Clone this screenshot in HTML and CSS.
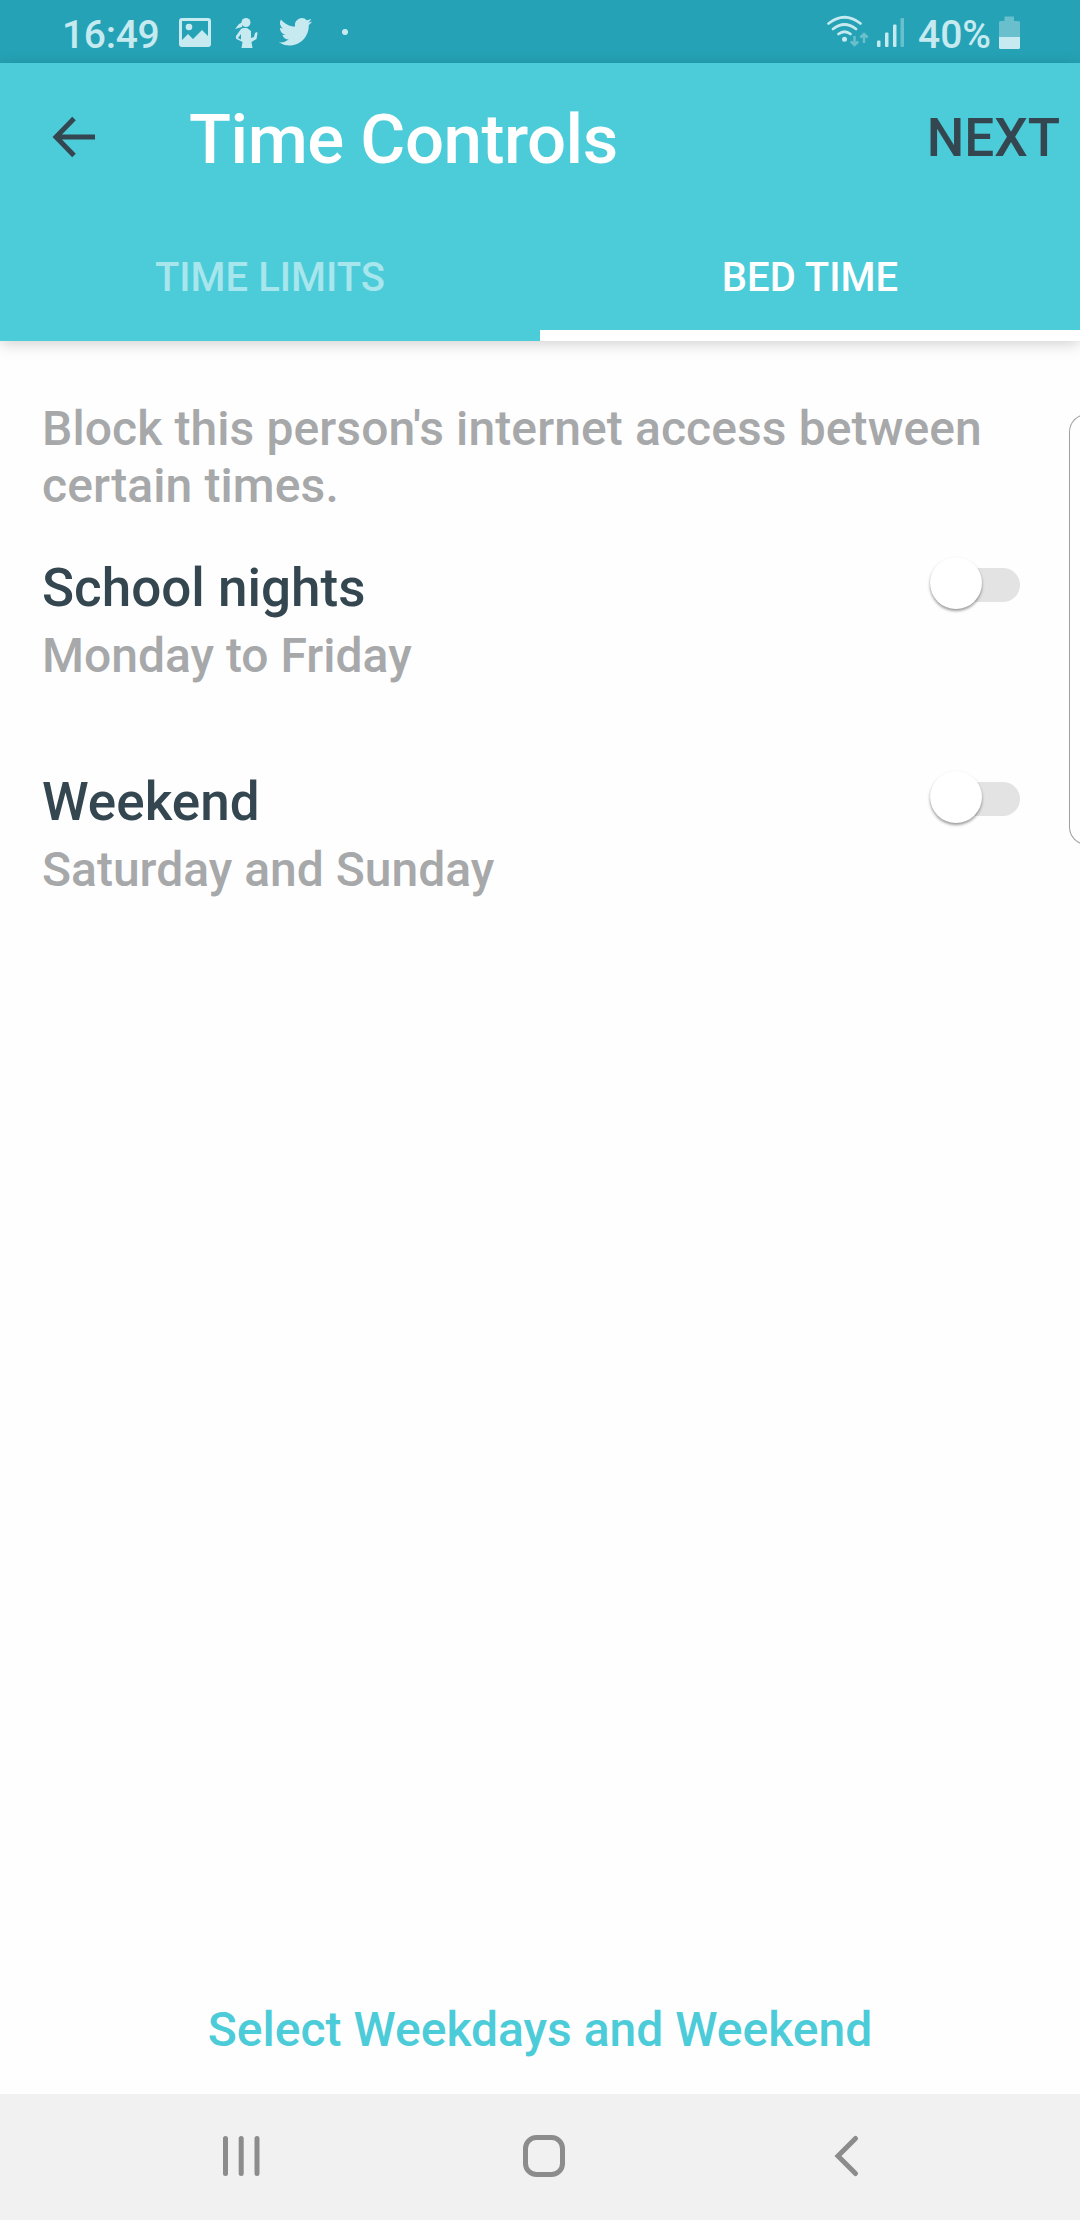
FILE: index.html
```
<!DOCTYPE html>
<html lang="en">
<head>
    <meta charset="UTF-8">
    <meta name="viewport" content="width=device-width, initial-scale=1.0">
    <title>Time Controls</title>
    <link rel="stylesheet" href="styles.css">
</head>
<body>
    <!-- Status Bar -->
    <div class="status-bar">
        <span class="clock">16:49</span>
        <svg class="status-left" width="136" height="63" viewBox="178 0 136 63">
            <path fill-rule="evenodd" d="M182 18h26q3 0 3 3v23q0 3-3 3h-26q-3 0-3-3v-23q0-3 3-3zM182 21v19l6-6 5 5 9-9 6 6v-15z"/>
            <circle cx="189" cy="27" r="3.3"/>
            <circle cx="246" cy="22.500" r="4.500"/>
            <path d="M243 22l-4 2-4 5 7-2zM243 28l4 0 4 3v7l3-1 1-4 2-1 .5 1-1 6-5 3 1 6h-11l1-6-6-3q-1-1-.5-3l5-7zM241 34l-3 4 3 1.500z" fill-rule="evenodd"/>
            <path transform="translate(278.600 15) scale(1.4)" d="M23.950 4.570a10 10 0 0 1-2.820.770 4.960 4.960 0 0 0 2.160-2.720c-.950.550-2 .950-3.130 1.180a4.920 4.920 0 0 0-8.380 4.480C7.690 8.090 4.070 6.130 1.640 3.160a4.920 4.920 0 0 0 1.520 6.570 4.900 4.900 0 0 1-2.230-.610v.060a4.920 4.920 0 0 0 3.950 4.830 5 5 0 0 1-2.210.080 4.940 4.940 0 0 0 4.600 3.420A9.870 9.870 0 0 1 0 19.540a14 14 0 0 0 7.550 2.210c9.050 0 14-7.500 14-13.980 0-.210 0-.420-.020-.630a9.940 9.940 0 0 0 2.420-2.570z"/>
        </svg>
        <span class="dot"></span>
        <svg class="status-right" width="80" height="63" viewBox="825 0 80 63">
            <g fill="none" stroke="#c6eaf0" stroke-width="2.800" stroke-linecap="round">
                <path d="M827.500 23.500q16-12.500 32 0M832 29q11.500-9 23 0M837.500 34q6-4.500 12 0"/>
            </g>
            <circle cx="843.500" cy="39.300" r="2.500"/>
            <path class="dim-line" d="M853.500 36v9M849.800 41.500l3.700 3.500 3.700-3.500M863 43v-9M859.300 37.500l3.700-3.500 3.700 3.500"/>
            <rect x="876" y="40.500" width="3.500" height="6.500" rx="1"/>
            <rect x="884" y="32.500" width="3.500" height="14.500" rx="1"/>
            <rect x="892" y="24.500" width="3.500" height="22.500" rx="1"/>
            <rect class="dim" x="899.500" y="18" width="3.500" height="29" rx="1"/>
        </svg>
        <span class="percent">40%</span>
        <svg class="battery" width="21" height="63" viewBox="998 0 21 63">
            <path class="dim" d="M998 37v-14.500q0-1.500 1.500-1.500h4v-4.500h9.500v4.500h4.500q1.500 0 1.500 1.500v14.500z"/>
            <path d="M998 37h21v10.500q0 1.500-1.500 1.500h-18q-1.500 0-1.500-1.500z"/>
        </svg>
    </div>

    <!-- Header -->
    <header>
        <div class="toolbar">
            <svg class="back" width="46" height="46" viewBox="0 0 46 46">
                <path d="M23 4.500L5 23l18 18.500M5 23h39"/>
            </svg>
            <h1>Time Controls</h1>
            <button class="next">NEXT</button>
        </div>
        <nav class="tabs">
            <a class="tab">TIME LIMITS</a>
            <a class="tab active">BED TIME</a>
        </nav>
    </header>

    <!-- Main Content -->
    <main>
        <p class="intro">Block this person's internet access between certain times.</p>
        <div class="row">
            <div>
                <h2>School nights</h2>
                <p>Monday to Friday</p>
            </div>
            <div class="switch"><span class="knob"></span></div>
        </div>
        <div class="row">
            <div>
                <h2>Weekend</h2>
                <p>Saturday and Sunday</p>
            </div>
            <div class="switch"><span class="knob"></span></div>
        </div>
        <a class="select">Select Weekdays and Weekend</a>
    </main>

    <!-- Edge panel handle -->
    <div class="edge-handle"></div>

    <!-- Navigation Bar -->
    <div class="nav-bar">
        <svg width="46" height="46" viewBox="0 0 46 46"><path d="M7.500 5.500v35M23.200 5.500v35M39 5.500v35"/></svg>
        <svg width="46" height="46" viewBox="0 0 46 46"><rect x="4.500" y="4.500" width="37" height="37" rx="11"/></svg>
        <svg width="46" height="46" viewBox="0 0 46 46"><path d="M32.500 5.500L15 23l17.500 17.500"/></svg>
    </div>
</body>
</html>
```

FILE: styles.css
```
* {
    box-sizing: border-box;
}
body {
    font-family: Roboto, sans-serif;
    font-weight: 500;
    margin: 0;
    height: 2220px;
    display: flex;
    flex-direction: column;
    background-color: #fefefe;
    color: #344750;
    overflow: hidden;
}
h1, h2, p {
    margin: 0;
    font-weight: 500;
}
.status-bar {
    height: 63px;
    display: flex;
    align-items: center;
    padding: 0 60px 0 62px;
    background-color: #25a2b5;
    color: #c6eaf0;
    font-size: 39px;
}
.status-bar svg {
    fill: #c6eaf0;
}
.status-bar .dim {
    fill: #69c0cc;
}
.status-bar .dim-line {
    fill: none;
    stroke: #69c0cc;
    stroke-width: 2.5;
}
.clock, .percent {
    padding-top: 6px;
}
.clock {
    width: 116px;
    letter-spacing: -0.3px;
}
.dot {
    width: 6px;
    height: 6px;
    margin-left: 28px;
    border-radius: 50%;
    background-color: #c6eaf0;
}
.status-right {
    margin-left: auto;
}
.percent {
    width: 80px;
    margin-left: 12px;
}
.battery {
    margin-left: 1px;
}
header {
    height: 278px;
    background-color: #4ccbd8;
    box-shadow: 0 3px 14px rgba(0, 0, 0, 0.18);
}
.toolbar {
    height: 147px;
    display: flex;
    align-items: center;
    padding: 0 20px 0 51px;
}
.back {
    fill: none;
    stroke: #344750;
    stroke-width: 5;
}
h1 {
    flex: 1;
    margin-left: 92px;
    padding-top: 5px;
    color: #fff;
    font-size: 69px;
    letter-spacing: -0.5px;
}
.next {
    padding: 2px 0 0;
    border: none;
    background: none;
    color: #344750;
    font: 500 53px Roboto, sans-serif;
}
.tabs {
    display: flex;
    height: 131px;
}
.tab {
    flex: 1;
    padding-top: 4px;
    border-bottom: 11px solid transparent;
    text-align: center;
    font-size: 40px;
    line-height: 127px;
    color: #a6e6ec;
}
.tab.active {
    color: #fff;
    border-bottom-color: #fff;
}
main {
    flex: 1;
    display: flex;
    flex-direction: column;
    padding: 59px 42px 22px;
}
.intro, .row p {
    color: #a7a8aa;
    font-size: 48px;
    line-height: 57px;
}
.intro {
    letter-spacing: 0.1px;
}
.row {
    display: flex;
    justify-content: space-between;
    height: 134px;
    margin-top: 80px;
}
.intro + .row {
    margin-top: 37px;
}
h2 {
    font-size: 53px;
    line-height: 74px;
}
.row p {
    line-height: 62px;
}
.switch {
    width: 90px;
    height: 34px;
    margin: 17px 18px 0 0;
    border-radius: 17px;
    background-color: #e3e3e3;
}
.knob {
    display: block;
    width: 52px;
    height: 52px;
    margin: -11px 0 0;
    border-radius: 50%;
    background-color: #fff;
    box-shadow: 0 2px 3px rgba(0, 0, 0, 0.4);
}
.select {
    margin-top: auto;
    text-align: center;
    color: #4ccbd8;
    font-size: 48px;
    line-height: 84px;
}
/* Lies over the content, cut off by the screen edge */
.edge-handle {
    position: absolute;
    top: 414px;
    right: -13px;
    width: 24px;
    height: 431px;
    border: 1px solid #a0a0a0;
    border-right: none;
    border-radius: 18px 0 0 18px;
}
.nav-bar {
    height: 126px;
    display: flex;
    justify-content: space-between;
    padding: 39px 211px 0 218px;
    background-color: #f1f1f1;
}
.nav-bar svg {
    fill: none;
    stroke: #8c8c8c;
    stroke-width: 5;
    stroke-linecap: round;
}
```
